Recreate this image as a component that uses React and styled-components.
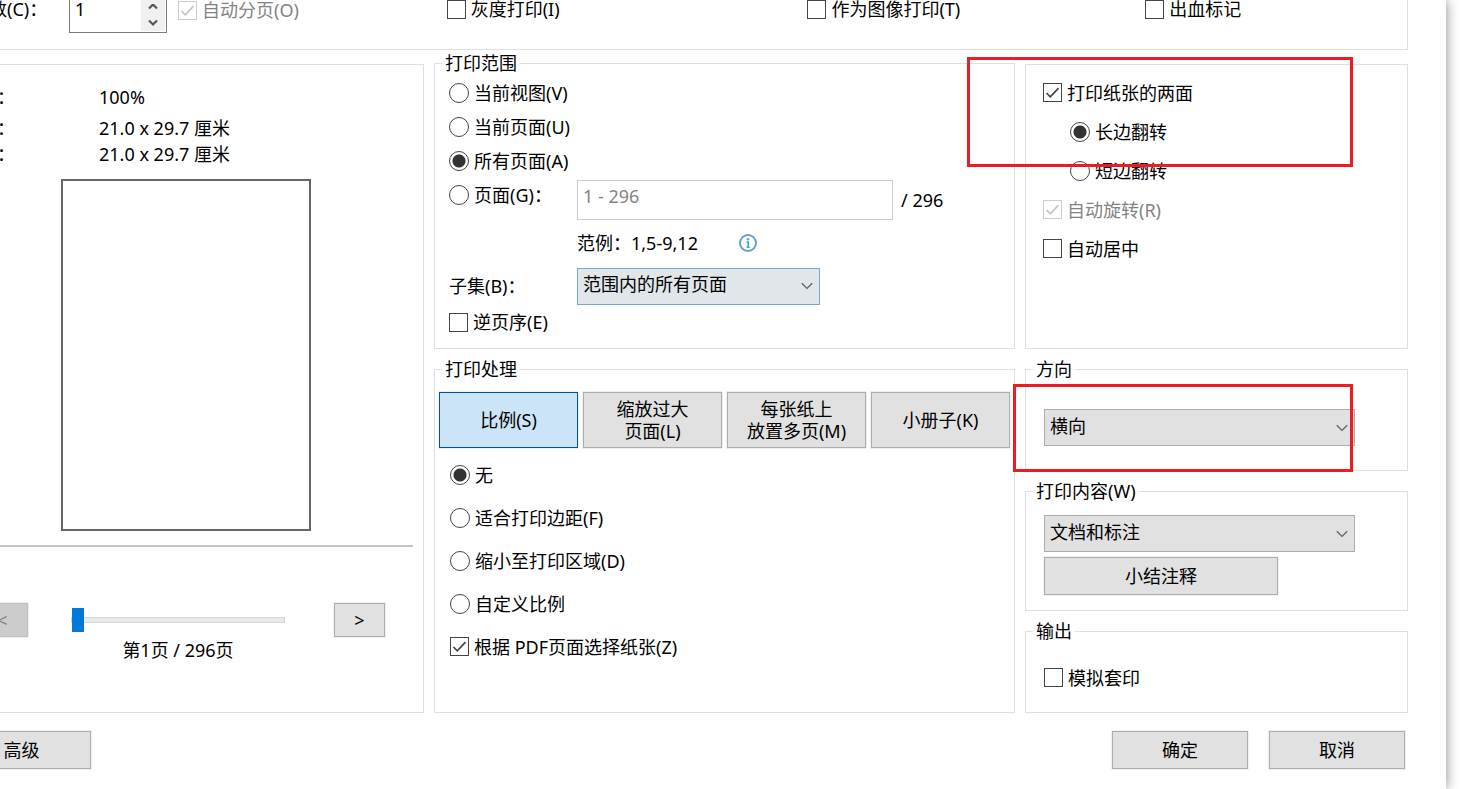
import styled, { createGlobalStyle } from "styled-components";

const GlobalStyle = createGlobalStyle`
  *, *::after {
    box-sizing: border-box;
  }

  body {
    margin: 0;
    background-color: #fff;
    color: #000;
    overflow: hidden;
  }

  body, button, input, select {
    font-family: "Noto Sans", "Noto Sans CJK SC", sans-serif;
    font-size: 18px;
    line-height: 22px;
  }
`;

const tick = (color) =>
  `url("data:image/svg+xml,%3Csvg xmlns='http://www.w3.org/2000/svg' viewBox='0 0 17 17'%3E%3Cpath d='M2.5 9 6.3 12.8 14.5 4.2' fill='none' stroke='%23${color}' stroke-width='1.7'/%3E%3C/svg%3E")`;

const arrow = `url("data:image/svg+xml,%3Csvg xmlns='http://www.w3.org/2000/svg' width='12' height='8' viewBox='0 0 12 8'%3E%3Cpath d='M.8 1.2 6 6.4 11.2 1.2' fill='none' stroke='%23606060' stroke-width='1.3'/%3E%3C/svg%3E")`;

const Dialog = styled.main`
  min-height: 100vh;
  margin-left: -48px;
  margin-right: 14px;
  padding-right: 38px;
  background-color: #fff;
  box-shadow: 0 0 12px #888;
`;

const TopPanel = styled.section`
  display: grid;
  grid-template-columns: 495fr 361fr 338fr 262fr;
  height: 50px;
  border: solid #dfdfdf;
  border-width: 0 1px 1px 0;
`;

const CopiesRow = styled.div`
  display: flex;
  align-items: flex-start;
  padding-left: 37px;
`;

const CopiesLabel = styled.label`
  width: 80px;
  line-height: 18px;
  white-space: nowrap;
`;

const Spinner = styled.div`
  display: flex;
  width: 98px;
  height: 33px;
  margin-right: 11px;
  border: 1px solid #7a7a7a;
  border-top: none;
`;

const SpinnerInput = styled.input`
  flex: 1;
  min-width: 0;
  padding: 0 0 14px 5px;
  border: none;
`;

const SpinnerArrows = styled.div`
  display: flex;
  flex-direction: column;
  width: 25px;
  padding: 0 1px 1px 0;
`;

const ArrowBtn = styled.button`
  display: flex;
  flex: 1;
  align-items: center;
  justify-content: center;
  padding: 0;
  border: none;
  background-color: #f0f0f0;
`;

const Option = styled.label`
  display: flex;
  align-items: center;
  gap: 5px;
  height: ${(props) => props.$height || 34}px;
  padding-left: ${(props) => props.$indent || 0}px;
  color: ${(props) => (props.$muted ? "#838383" : "#000")};
  white-space: nowrap;
`;

const Box = styled.input`
  appearance: none;
  flex: none;
  width: 19px;
  height: 19px;
  margin: 0;
  border: 1px solid #444;
  background-color: #fff;

  &:checked {
    background-image: ${tick("444444")};
  }

  &:disabled {
    border-color: #ccc;
  }

  &:disabled:checked {
    background-image: ${tick("c4c4c4")};
  }
`;

const Dot = styled.input`
  appearance: none;
  flex: none;
  width: 20px;
  height: 20px;
  margin: 0;
  border: 1px solid #444;
  border-radius: 50%;
  background-color: #fff;

  &:checked {
    background-image: radial-gradient(circle, #333 6px, transparent 7px);
  }
`;

const Columns = styled.div`
  display: grid;
  grid-template-columns: 472fr 581fr 383fr;
  gap: 10px;
  padding-top: 2px;
`;

const Column = styled.div`
  display: flex;
  flex-direction: column;
  gap: 9px;
  min-width: 0;
`;

const Panel = styled.section`
  flex: 1;
  margin-top: 12px;
  border: 1px solid #dfdfdf;
`;

const Group = styled.fieldset`
  min-width: 0;
  margin: 0;
  padding: 0 0 ${(props) => props.$bottom}px;
  border: 1px solid #dfdfdf;
`;

const Legend = styled.legend`
  margin-left: 7px;
  padding: 0 3px;
`;

const Info = styled.dl`
  display: grid;
  grid-template-columns: 102px 1fr;
  margin: 0;
  padding: 19px 0 0 44px;
  line-height: 26px;
`;

const Term = styled.dt`
  height: ${(props) => props.$height}px;
`;

const Value = styled.dd`
  margin: 0;
`;

const Preview = styled.div`
  width: 250px;
  height: 352px;
  margin: 12px 0 14px 108px;
  border: 2px solid #666;
`;

const Divider = styled.hr`
  height: 2px;
  margin: 0 10px 0 0;
  border: none;
  background-color: #c4c4c4;
`;

const Pager = styled.div`
  display: flex;
  align-items: center;
  padding: 56px 38px 0 24px;
`;

const Button = styled.button`
  min-width: ${(props) => props.$width}px;
  height: ${(props) => props.$height || 38}px;
  padding: 0;
  border: 1px solid #adadad;
  background-color: #e1e1e1;
  box-shadow: 0 0 0 1px #f0f0f0;
  color: #000;

  &:disabled {
    border-color: #bfbfbf;
    background-color: #ccc;
    color: #838383;
  }
`;

const Slider = styled.input`
  appearance: none;
  flex: 1;
  min-width: 0;
  height: 26px;
  margin: 0 49px 0 43px;
  background: transparent;

  &::-webkit-slider-runnable-track {
    height: 6px;
    border: 1px solid #d6d6d6;
    background-color: #e7eaea;
  }

  &::-webkit-slider-thumb {
    appearance: none;
    width: 12px;
    height: 24px;
    margin-top: -10px;
    background-color: #0078d7;
  }
`;

const PageCount = styled.p`
  margin: 2px 0 0;
  padding-right: 20px;
  text-align: center;
`;

const RangeBody = styled.div`
  padding: 2px 14px 0;
`;

const FieldRow = styled.div`
  display: grid;
  grid-template-columns: 128px 1fr;
  height: ${(props) => props.$height}px;
`;

const FieldValue = styled.div`
  display: flex;
  align-items: center;
  gap: 8px;
`;

const PageInput = styled.input`
  width: 316px;
  height: 40px;
  padding: 0 5px 9px;
  border: 1px solid #ccc;
  background-color: #fff;

  &::placeholder {
    color: #838383;
    opacity: 1;
  }
`;

const InfoBtn = styled.button`
  display: flex;
  margin-left: 32px;
  padding: 0;
  border: none;
  background: none;
`;

const Select = styled.select`
  appearance: none;
  width: ${(props) => props.$width}px;
  height: 37px;
  padding: 0 28px 4px 5px;
  border: 1px solid ${(props) => (props.$active ? "#7aa7cc" : "#adadad")};
  border-radius: 0;
  background: ${arrow} no-repeat right 6px center
    ${(props) => (props.$active ? "#e1e6ea" : "#e1e1e1")};
  color: #000;
`;

const ModeRow = styled.div`
  display: grid;
  grid-template-columns: repeat(4, 1fr);
  gap: 5px;
  padding: 12px 4px 5px;
`;

const ModeBtn = styled.button`
  height: 56px;
  padding: 0;
  border: 1px solid ${(props) => (props.$selected ? "#005499" : "#adadad")};
  background-color: ${(props) => (props.$selected ? "#cce4f7" : "#e1e1e1")};
  box-shadow: 0 0 0 1px #f0f0f0;
  color: #000;
  white-space: pre-line;
`;

const ModeOptions = styled.div`
  padding: 0 15px;
`;

const SideBody = styled.div`
  display: flex;
  flex-direction: column;
  align-items: flex-start;
  gap: 5px;
  padding: ${(props) => props.$top}px 18px 0;
`;

// red frame drawn over a panel to point at a setting
const Marked = styled.div`
  display: flex;
  flex-direction: column;
  position: relative;

  &::after {
    content: "";
    position: absolute;
    top: ${(props) => props.$top}px;
    left: ${(props) => props.$left}px;
    width: ${(props) => props.$width}px;
    height: ${(props) => props.$height}px;
    border: 3px solid #ed1c24;
    pointer-events: none;
  }
`;

const SidePanel = styled(Panel)`
  flex: none;
  min-height: 285px;
  padding: 8px 17px 0;
`;

const Footer = styled.footer`
  display: flex;
  gap: 21px;
  padding: 18px 3px 19px 0;
`;

const Spacer = styled.div`
  flex: 1;
`;

const Check = ({ children, height, disabled, checked }) => (
  <Option $height={height} $muted={disabled}>
    <Box type="checkbox" defaultChecked={checked} disabled={disabled} />
    {children}
  </Option>
);

const Radio = ({ children, name, height, indent, checked }) => (
  <Option $height={height} $indent={indent}>
    <Dot type="radio" name={name} defaultChecked={checked} />
    {children}
  </Option>
);

const Chevron = ({ d }) => (
  <svg width="10" height="8" viewBox="0 0 10 8">
    <path d={d} fill="none" stroke="#555" strokeWidth="2.2" />
  </svg>
);

const InfoIcon = () => (
  <svg width="20" height="20" viewBox="0 0 20 20">
    <circle cx="10" cy="10" r="8" fill="none" stroke="#5fa4c8" strokeWidth="2" />
    <circle cx="10" cy="6.2" r="1.2" fill="#4ba0d0" />
    <path d="M8.5 9h1.7v5M8.5 14.2h3.2" fill="none" stroke="#4ba0d0" strokeWidth="1.6" />
  </svg>
);

const App = () => {
  return (
    <>
      <GlobalStyle />
      <Dialog>
        <TopPanel>
          <CopiesRow>
            <CopiesLabel htmlFor="copies">数(C)：</CopiesLabel>
            <Spinner>
              <SpinnerInput id="copies" defaultValue="1" />
              <SpinnerArrows>
                <ArrowBtn aria-label="+">
                  <Chevron d="M1 4.5 5 .5 9 4.5" />
                </ArrowBtn>
                <ArrowBtn aria-label="-">
                  <Chevron d="M1 1.5 5 5.5 9 1.5" />
                </ArrowBtn>
              </SpinnerArrows>
            </Spinner>
            <Check height={20} checked disabled>
              自动分页(O)
            </Check>
          </CopiesRow>
          <Check height={18}>灰度打印(I)</Check>
          <Check height={18}>作为图像打印(T)</Check>
          <Check height={18}>出血标记</Check>
        </TopPanel>

        <Columns>
          <Column>
            <Panel>
              <Info>
                <Term $height={31}>：</Term>
                <Value>100%</Value>
                <Term $height={26}>：</Term>
                <Value>21.0 x 29.7 厘米</Value>
                <Term $height={26}>：</Term>
                <Value>21.0 x 29.7 厘米</Value>
              </Info>
              <Preview />
              <Divider />
              <Pager>
                <Button $width={51} $height={34} disabled>
                  &lt;
                </Button>
                <Slider type="range" min="1" max="296" defaultValue="1" aria-labelledby="page-count" />
                <Button $width={51} $height={34}>
                  &gt;
                </Button>
              </Pager>
              <PageCount id="page-count">第1页 / 296页</PageCount>
            </Panel>
          </Column>

          <Column>
            <Group $bottom={12}>
              <Legend>打印范围</Legend>
              <RangeBody>
                <Radio name="range">当前视图(V)</Radio>
                <Radio name="range">当前页面(U)</Radio>
                <Radio name="range" checked>
                  所有页面(A)
                </Radio>
                <FieldRow $height={44}>
                  <Radio name="range">页面(G)：</Radio>
                  <FieldValue>
                    <PageInput placeholder="1 - 296" aria-label="页面(G)" />
                    <span>/ 296</span>
                  </FieldValue>
                </FieldRow>
                <FieldRow $height={42}>
                  <span />
                  <FieldValue>
                    <span>范例：1,5-9,12</span>
                    <InfoBtn aria-label="范例">
                      <InfoIcon />
                    </InfoBtn>
                  </FieldValue>
                </FieldRow>
                <FieldRow $height={44}>
                  <Option htmlFor="subset" $height={44}>
                    子集(B)：
                  </Option>
                  <FieldValue>
                    <Select id="subset" $width={243} $active>
                      <option>范围内的所有页面</option>
                    </Select>
                  </FieldValue>
                </FieldRow>
                <Check height={28}>逆页序(E)</Check>
              </RangeBody>
            </Group>

            <Group $bottom={44}>
              <Legend>打印处理</Legend>
              <ModeRow>
                <ModeBtn $selected>比例(S)</ModeBtn>
                <ModeBtn>{"缩放过大\n页面(L)"}</ModeBtn>
                <ModeBtn>{"每张纸上\n放置多页(M)"}</ModeBtn>
                <ModeBtn>小册子(K)</ModeBtn>
              </ModeRow>
              <ModeOptions>
                <Radio name="scale" height={43} checked>
                  无
                </Radio>
                <Radio name="scale" height={43}>
                  适合打印边距(F)
                </Radio>
                <Radio name="scale" height={43}>
                  缩小至打印区域(D)
                </Radio>
                <Radio name="scale" height={43}>
                  自定义比例
                </Radio>
                <Check height={43} checked>
                  根据 PDF页面选择纸张(Z)
                </Check>
              </ModeOptions>
            </Group>
          </Column>

          <Column>
            <Marked $top={5} $left={-58} $width={386} $height={110}>
              <SidePanel>
                <Check height={39} checked>
                  打印纸张的两面
                </Check>
                <Radio name="flip" height={39} indent={27} checked>
                  长边翻转
                </Radio>
                <Radio name="flip" height={39} indent={27}>
                  短边翻转
                </Radio>
                <Check height={39} checked disabled>
                  自动旋转(R)
                </Check>
                <Check height={39}>自动居中</Check>
              </SidePanel>
            </Marked>

            <Marked $top={26} $left={-12} $width={340} $height={88}>
              <Group $bottom={24}>
                <Legend>方向</Legend>
                <SideBody $top={29}>
                  <Select $width={311} aria-label="方向">
                    <option>横向</option>
                  </Select>
                </SideBody>
              </Group>
            </Marked>

            <Group $bottom={15}>
              <Legend>打印内容(W)</Legend>
              <SideBody $top={13}>
                <Select $width={311} aria-label="打印内容(W)">
                  <option>文档和标注</option>
                </Select>
                <Button $width={234}>小结注释</Button>
              </SideBody>
            </Group>

            <Group $bottom={15}>
              <Legend>输出</Legend>
              <SideBody $top={16}>
                <Check height={39}>模拟套印</Check>
              </SideBody>
            </Group>
          </Column>
        </Columns>

        <Footer>
          <Button $width={139}>高级</Button>
          <Spacer />
          <Button $width={136}>确定</Button>
          <Button $width={136}>取消</Button>
        </Footer>
      </Dialog>
    </>
  );
};

export default App;
